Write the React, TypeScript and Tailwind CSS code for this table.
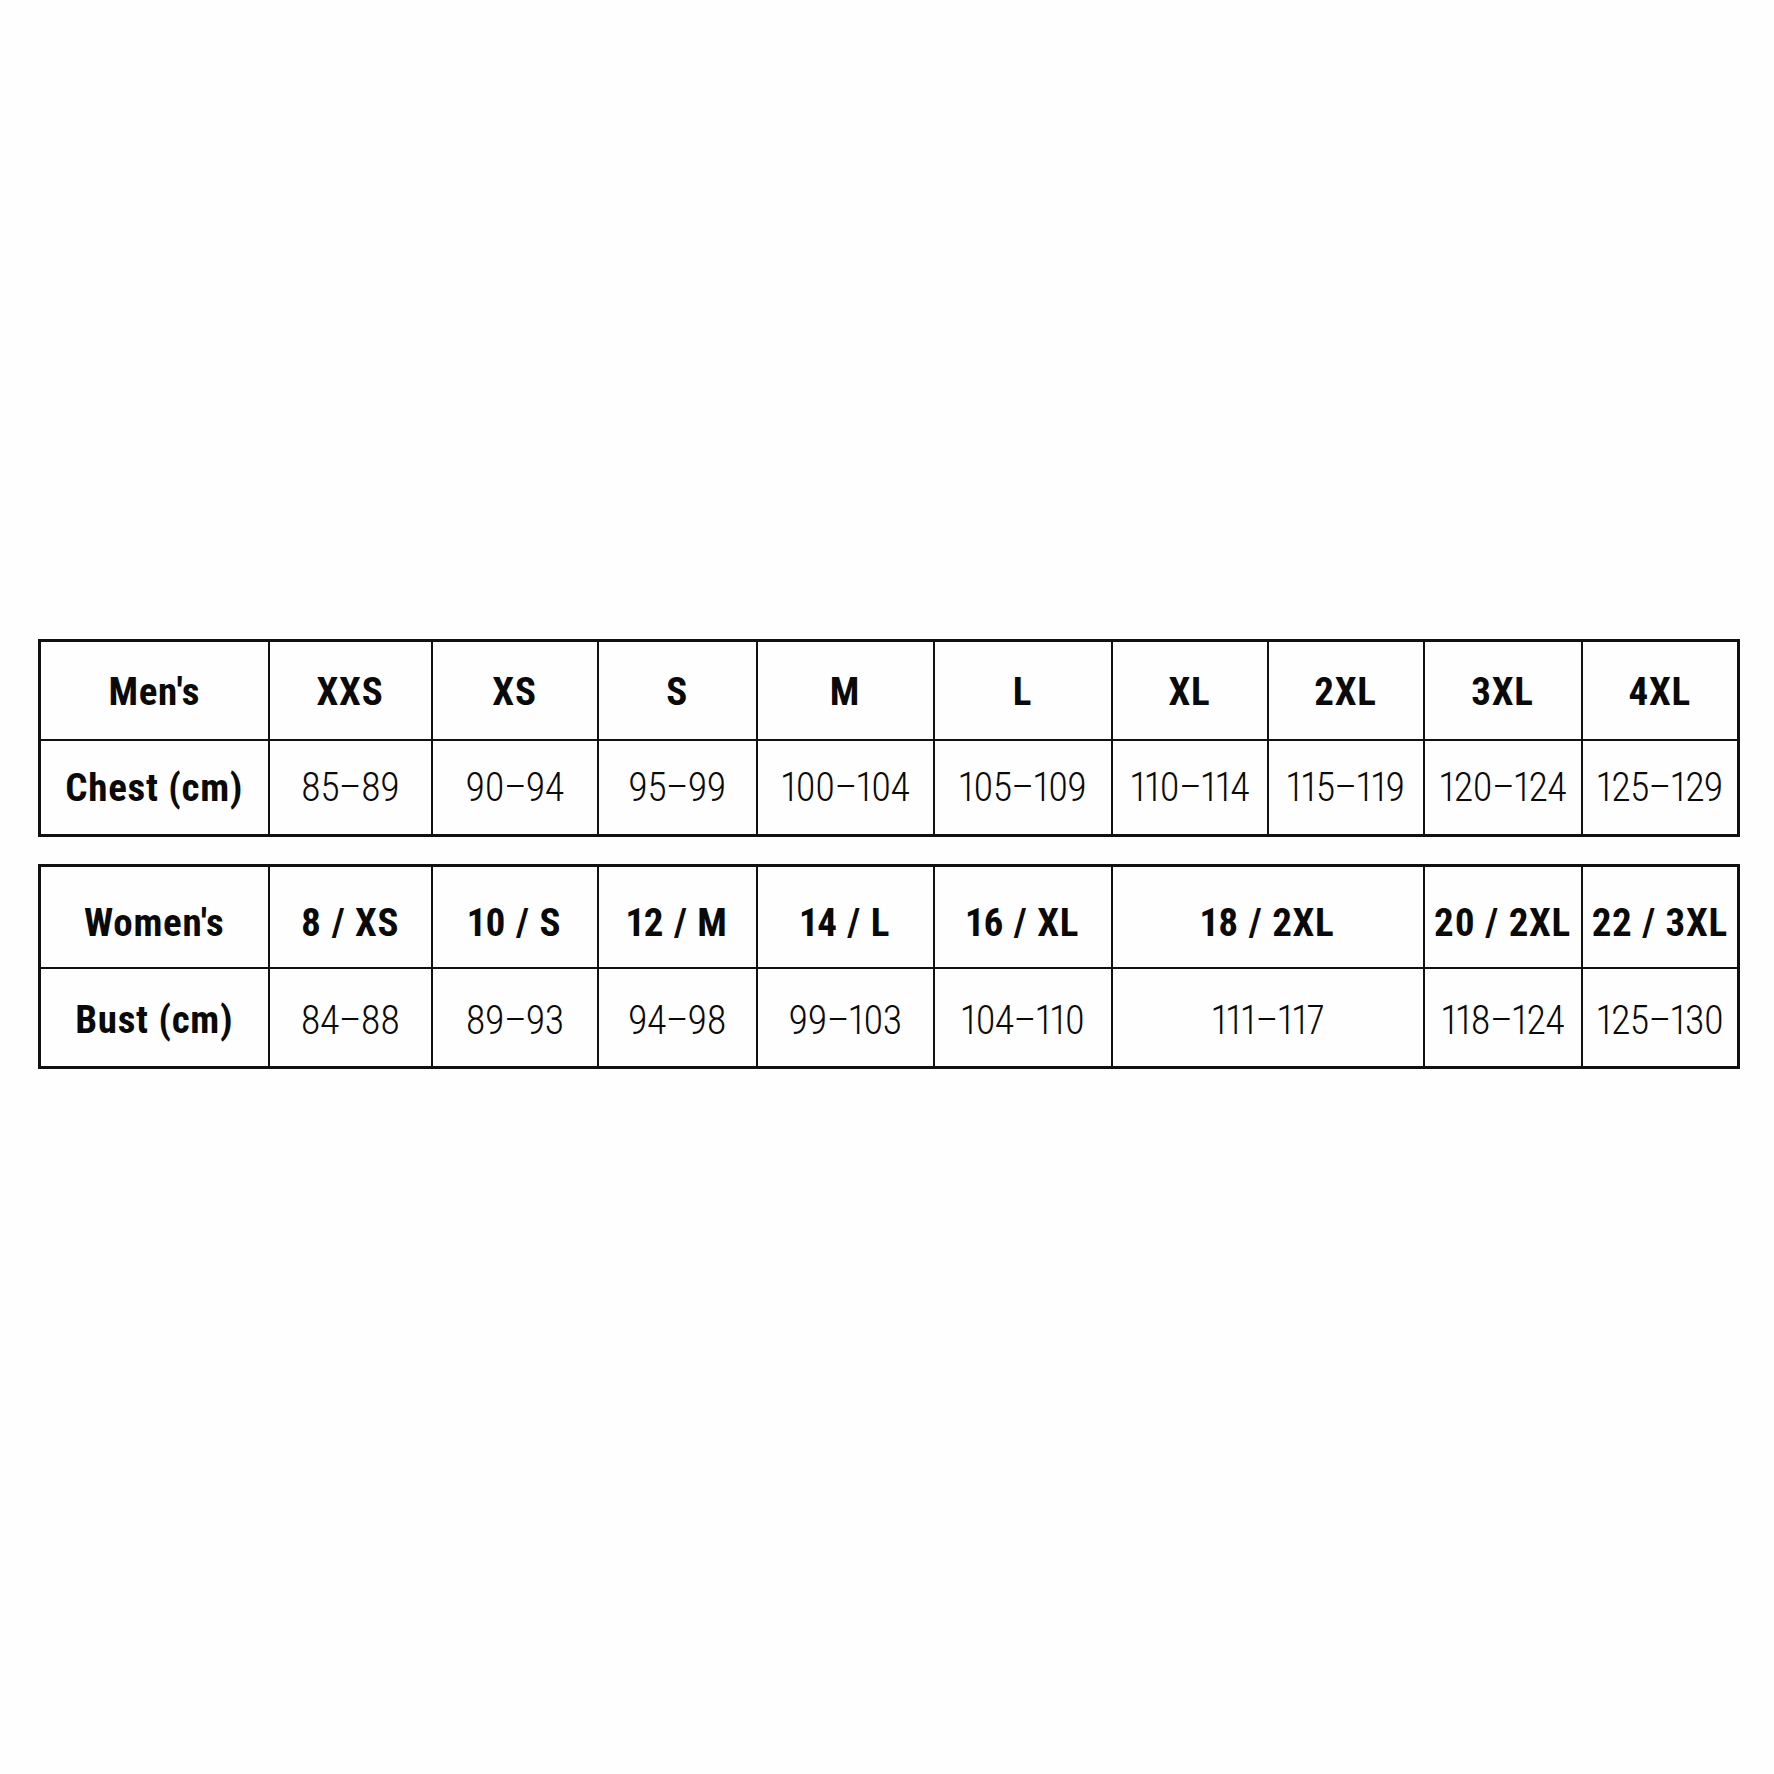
import React from 'react';

// Lebar kolom (px) diambil dari gambar referensi
const colWidths = ['w-[229px]', 'w-[163px]', 'w-[166px]', 'w-[159px]', 'w-[177px]', 'w-[178px]', 'w-[156px]', 'w-[156px]', 'w-[158px]', 'w-[157px]'];

interface Cell {
    label: string;
    span?: number;
}

const mens = {
    head: [{ label: "Men's" }, { label: 'XXS' }, { label: 'XS' }, { label: 'S' }, { label: 'M' }, { label: 'L' }, { label: 'XL' }, { label: '2XL' }, { label: '3XL' }, { label: '4XL' }] as Cell[],
    body: [{ label: 'Chest (cm)' }, { label: '85–89' }, { label: '90–94' }, { label: '95–99' }, { label: '100–104' }, { label: '105–109' }, { label: '110–114' }, { label: '115–119' }, { label: '120–124' }, { label: '125–129' }] as Cell[],
};

const womens = {
    head: [{ label: "Women's" }, { label: '8 / XS' }, { label: '10 / S' }, { label: '12 / M' }, { label: '14 / L' }, { label: '16 / XL' }, { label: '18 / 2XL', span: 2 }, { label: '20 / 2XL' }, { label: '22 / 3XL' }] as Cell[],
    body: [{ label: 'Bust (cm)' }, { label: '84–88' }, { label: '89–93' }, { label: '94–98' }, { label: '99–103' }, { label: '104–110' }, { label: '111–117', span: 2 }, { label: '118–124' }, { label: '125–130' }] as Cell[],
};

const font = "font-['Roboto_Condensed','Liberation_Sans_Narrow','DejaVu_Sans_Condensed',Roboto,sans-serif]";
const bold = 'text-[39px] font-bold tracking-[0.7px] proportional-nums';
const plain = 'text-[40px] font-light tracking-[-0.8px] proportional-nums';

interface TableProps {
    head: Cell[];
    body: Cell[];
    headRow: string; // tinggi + padding baris header
    bodyRow: string; // tinggi + padding baris isi
}

function SizeTable({ head, body, headRow, bodyRow }: TableProps) {
    return (
        <table className={`w-[1699px] table-fixed border-collapse border-[3px] border-[#111] text-[#0a0a0a] ${font}`}>
            <colgroup>
                {colWidths.map((w, i) => (
                    <col key={i} className={w} />
                ))}
            </colgroup>
            <tbody>
                <tr className={headRow}>
                    {head.map((c, i) => (
                        <td key={i} colSpan={c.span} className={`border-[2.5px] border-[#111] px-0 pb-0 text-center align-middle leading-none whitespace-nowrap ${bold}`}>
                            {c.label}
                        </td>
                    ))}
                </tr>
                <tr className={bodyRow}>
                    {body.map((c, i) => (
                        <td
                            key={i}
                            colSpan={c.span}
                            className={`border-[2.5px] border-[#111] px-0 pb-0 text-center align-middle leading-none whitespace-nowrap ${i === 0 ? bold : plain}`}
                        >
                            {c.label}
                        </td>
                    ))}
                </tr>
            </tbody>
        </table>
    );
}

export default function App() {
    return (
        <div className="min-h-[1774px] w-[1774px] bg-[#fefefe] pt-[639px] pl-[38px]">
            <div className="flex flex-col gap-[27px]">
                <SizeTable head={mens.head} body={mens.body} headRow="h-[99px] [&>td]:pt-[5px]" bodyRow="h-[96px] [&>td]:pt-[2px]" />
                <SizeTable head={womens.head} body={womens.body} headRow="h-[102px] [&>td]:pt-[14px]" bodyRow="h-[100px] [&>td]:pt-[7px]" />
            </div>
        </div>
    );
}
